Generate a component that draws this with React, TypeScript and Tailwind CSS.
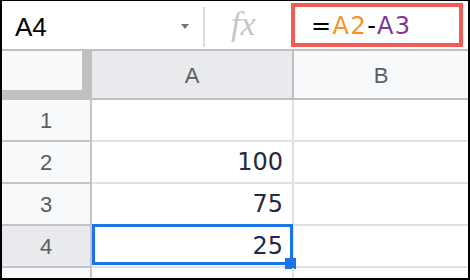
import React from "react";

const rowHeaderCls =
  "h-[42px] flex items-center justify-center border-r-2 border-b-2 border-[#c4c4c4] text-[22px] text-[#5a5d62]";
const cellA =
  "h-[42px] flex items-center justify-end pr-[9px] border-r-2 border-b-2 border-[#e2e2e2] text-[24px] text-[#262940]";
const cellB = "h-[42px] border-b-2 border-[#e2e2e2]";

export default function App() {
  const rows = [
    { n: "1", v: "" },
    { n: "2", v: "100" },
    { n: "3", v: "75" },
    { n: "4", v: "25", sel: true },
    { n: "5", v: "" },
  ];
  return (
    <div className="w-[470px] h-[280px] overflow-hidden bg-black pt-[1px] pl-[2px] pr-[2px] pb-[2px]">
      <div className="w-[466px] h-[277px] overflow-hidden bg-white" style={{ fontFamily: "'Liberation Sans', Arial, sans-serif" }}>
        {/* formula bar */}
        <div className="h-[50px] flex border-b-2 border-[#c0c0c0] bg-white">
          <div className="w-[201px] flex items-center pl-[13px] pr-[14px]">
            <span className="text-[26px] text-black leading-none pt-[3px]">A4</span>
            <div className="ml-auto mt-[3px] w-0 h-0 border-l-[4px] border-r-[4px] border-t-[5px] border-l-transparent border-r-transparent border-t-[#777]" />
          </div>
          <div className="w-[2px] h-[40px] mt-[6px] bg-[#dadce0]" />
          <div className="w-[86px] flex items-center pl-[26px]">
            <span
              className="text-[34px] italic text-[#c6c6c6] leading-none -mt-[2px]"
              style={{ fontFamily: "'Liberation Serif', 'Times New Roman', serif" }}
            >
              fx
            </span>
          </div>
          <div className="w-[172px] h-[44px] mt-[2px] border-4 border-[#f15b56] flex items-center pl-[16px]">
            <span
              className="text-[24px] leading-none pt-[1px] tracking-[1.5px]"
              style={{ fontFamily: "'DejaVu Sans', Verdana, sans-serif" }}
            >
              <span className="text-black">=</span>
              <span className="text-[#f6931f]">A2</span>
              <span className="text-black">-</span>
              <span className="text-[#7e3794]">A3</span>
            </span>
          </div>
        </div>
        {/* grid */}
        <div className="grid grid-cols-[90px_202px_1fr]">
          <div className="h-[49px] bg-[#f8f9fa] border-r-[10px] border-b-[10px] border-[#c0c0c0]" />
          <div className="h-[49px] bg-[#e8eaed] border-r-2 border-b-2 border-[#c0c0c0] flex items-center justify-center text-[22px] text-[#5a5d62] pt-[2px]">
            A
          </div>
          <div className="h-[49px] bg-[#f8f9fa] border-b-2 border-[#c0c0c0] flex items-center justify-center text-[22px] text-[#5a5d62] pt-[2px]">
            B
          </div>
          {rows.map((r) => (
            <React.Fragment key={r.n}>
              <div className={`${rowHeaderCls} ${r.sel ? "bg-[#e8eaed]" : "bg-[#f8f9fa]"}`}>{r.n}</div>
              <div className={`${cellA} relative`} style={{ fontFamily: "'DejaVu Sans', Verdana, sans-serif" }}>
                {r.v}
                {r.sel && (
                  <>
                    <div className="absolute -top-[2px] left-0 -right-[1px] bottom-[1px] border-[3px] border-[#1a73e8]" />
                    <div className="absolute -right-[4px] -bottom-[3px] w-[11px] h-[11px] bg-[#1a73e8]" />
                  </>
                )}
              </div>
              <div className={cellB} />
            </React.Fragment>
          ))}
        </div>
      </div>
    </div>
  );
}
